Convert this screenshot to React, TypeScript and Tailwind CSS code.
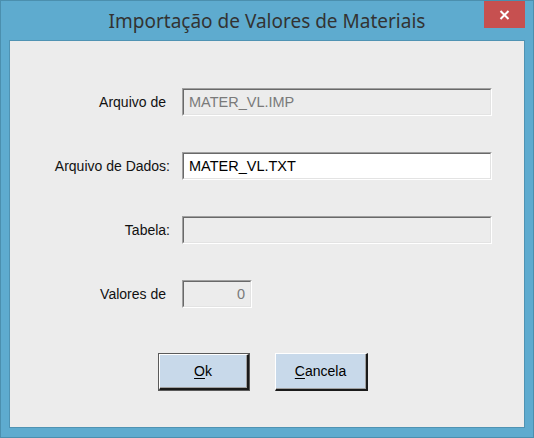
import React from "react";

function Field({ value, enabled, width, align = "left" }: { value: string; enabled?: boolean; width: string; align?: "left" | "right" }) {
  return (
    <div className={`${width} h-[28px] border-t border-l border-[#a0a0a0] border-b-white border-r-white border-b border-r`}>
      <div
        className={`h-full w-full border-t border-l border-[#696969] border-b border-r border-b-[#e3e3e3] border-r-[#e3e3e3] flex items-center px-[5px] ${
          enabled ? "bg-white text-black" : "bg-[#ececec] text-[#7a7a7a]"
        } ${align === "right" ? "justify-end" : "justify-start"}`}
      >
        <span className="text-[14.5px] leading-none">{value}</span>
      </div>
    </div>
  );
}

function Row({ label, pr, children }: { label: string; pr?: boolean; children: React.ReactNode }) {
  return (
    <div className="flex items-center h-[28px]">
      <div className={`w-[160px] text-right text-[14px] text-[#111] ${pr ? "pr-[4px]" : ""}`}>{label}</div>
      <div className="ml-[12px]">{children}</div>
    </div>
  );
}

function Button({ children, isDefault }: { children: React.ReactNode; isDefault?: boolean }) {
  const inner = (
    <div className="h-full w-full border-t border-l border-white border-b-2 border-r-2 border-b-[#1a1a1a] border-r-[#1a1a1a]">
      <div className="h-full w-full border-b border-r border-b-[#a0a0a0] border-r-[#a0a0a0] bg-[#c8d9ea] flex items-center justify-center text-[14px] text-black">
        {children}
      </div>
    </div>
  );
  return isDefault ? (
    <div className="w-[92px] h-[38px] border border-[#5a5a5a]">{inner}</div>
  ) : (
    <div className="w-[93px] h-[38px]">{inner}</div>
  );
}

export default function App() {
  return (
    <div
      className="w-[534px] h-[438px] bg-[#5eabcf] border border-[#4b8fae] flex flex-col"
      style={{ fontFamily: '"Liberation Sans", Arial, sans-serif' }}
    >
      <div className="relative h-[39px] flex items-center justify-center">
        <span
          className="text-[19px] text-[#333] pt-[1px]"
          style={{ fontFamily: '"Noto Sans", "Open Sans", sans-serif' }}
        >
          Importação de Valores de Materiais
        </span>
        <div className="absolute right-[8px] top-0 w-[41px] h-[27px] bg-[#c75050] flex items-center justify-center">
          <svg width="11" height="10" viewBox="0 0 11 10">
            <path d="M1.5 1 L9.5 9 M9.5 1 L1.5 9" stroke="white" strokeWidth="2" />
          </svg>
        </div>
      </div>
      <div className="mx-[8px] mb-[9px] flex-1 border border-[#4f93b3] bg-[#ececec]">
        <div className="flex flex-col gap-[36px] pt-[47px]">
          <Row label="Arquivo de" pr>
            <Field value="MATER_VL.IMP" width="w-[310px]" />
          </Row>
          <Row label="Arquivo de Dados:">
            <Field value="MATER_VL.TXT" enabled width="w-[310px]" />
          </Row>
          <Row label="Tabela:">
            <Field value="" width="w-[310px]" />
          </Row>
          <Row label="Valores de" pr>
            <Field value="0" width="w-[70px]" align="right" />
          </Row>
        </div>
        <div className="flex gap-[25px] pl-[148px] mt-[45px]">
          <Button isDefault>
            <span>
              <span className="underline underline-offset-2">O</span>k
            </span>
          </Button>
          <Button>
            <span>
              <span className="underline underline-offset-2">C</span>ancela
            </span>
          </Button>
        </div>
      </div>
    </div>
  );
}
